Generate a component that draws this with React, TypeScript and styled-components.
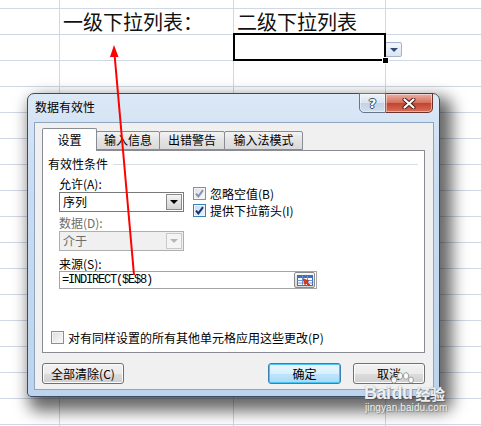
import React from 'react';
import styled, { createGlobalStyle, css } from 'styled-components';

const GlobalStyle = createGlobalStyle`
  html, body {
    margin: 0;
    padding: 0;
    background: #fff;
    overflow: hidden;
  }
  body {
    font-family: "Noto Sans CJK SC", sans-serif;
  }
`;

const Page = styled.div`
  position: relative;
  width: 482px;
  height: 426px;
  overflow: hidden;
  background: #fff;
`;

/* ---------- spreadsheet ---------- */

const Sheet = styled.div`
  display: grid;
  grid-template-columns: 60px 174px 152px 96px;
  grid-auto-rows: 26px;
  margin-top: -17px;
`;

const SheetCell = styled.div<{ $active?: boolean }>`
  position: relative;
  box-sizing: border-box;
  border-right: 1px solid #d0d7e5;
  border-bottom: 1px solid #d0d7e5;
  display: flex;
  align-items: flex-end;
  padding-left: 3px;
  z-index: ${(p) => (p.$active ? 2 : 'auto')};
  ${(p) =>
    p.$active &&
    css`
      &::after {
        content: '';
        position: absolute;
        top: -2px;
        left: -1px;
        right: -1px;
        bottom: -1px;
        border: 2px solid #000;
      }
    `}
`;

const HeaderText = styled.span`
  font-family: "Noto Sans CJK SC", serif;
  font-size: 20px;
  line-height: 24px;
  color: #111;
  white-space: nowrap;
`;

const FillHandle = styled.span`
  position: absolute;
  right: -4px;
  bottom: -4px;
  width: 5px;
  height: 5px;
  background: #000;
  border: 1px solid #fff;
  z-index: 3;
`;

const CellDropButton = styled.span`
  position: absolute;
  left: 100%;
  top: 7px;
  width: 17px;
  height: 15px;
  box-sizing: border-box;
  border: 1px solid #a3b3ca;
  border-radius: 2px;
  background: linear-gradient(#f4f7fc, #dbe4f1);
  display: flex;
  align-items: center;
  justify-content: center;
  &::before {
    content: '';
    border-left: 4px solid transparent;
    border-right: 4px solid transparent;
    border-top: 4px solid #33477a;
  }
`;

/* ---------- dialog window ---------- */

const Window = styled.div`
  position: absolute;
  left: 27px;
  top: 93px;
  width: 413px;
  height: 304px;
  box-sizing: border-box;
  border: 1px solid #3d4b5c;
  border-radius: 7px 7px 4px 4px;
  background: linear-gradient(180deg, #dbe8f6 0%, #c9dcf1 30%, #bdd4ee 100%);
  box-shadow: 7px 9px 16px 5px rgba(0, 0, 0, 0.6);
  display: flex;
  flex-direction: column;
  padding: 0 5px 6px 6px;
  font-size: 12px;
  color: #000;
`;

const TitleBar = styled.div`
  height: 28px;
  display: flex;
  align-items: flex-start;
  flex-shrink: 0;
`;

const Title = styled.span`
  padding: 6px 0 0 1px;
  line-height: 14px;
`;

const CaptionGroup = styled.div`
  margin: -1px 1px 0 auto;
  display: flex;
`;

const CaptionButton = styled.span<{ $close?: boolean }>`
  height: 20px;
  width: ${(p) => (p.$close ? 47 : 27)}px;
  box-sizing: border-box;
  border: 1px solid ${(p) => (p.$close ? '#6a302a' : '#66768a')};
  border-left-width: ${(p) => (p.$close ? 0 : 1)}px;
  border-radius: ${(p) => (p.$close ? '0 0 5px 0' : '0 0 0 5px')};
  background: ${(p) =>
    p.$close
      ? 'linear-gradient(#eab0a4 0%, #d7705e 48%, #c4432f 52%, #d6705a 100%)'
      : 'linear-gradient(#eef3f9 0%, #d9e4f0 48%, #c2d2e5 52%, #d2deec 100%)'};
  box-shadow: inset 0 0 0 1px rgba(255, 255, 255, 0.45);
  display: flex;
  align-items: center;
  justify-content: center;
`;

const HelpGlyph = styled.span`
  font-family: "DejaVu Sans", sans-serif;
  font-weight: bold;
  font-size: 13px;
  line-height: 13px;
  color: #fff;
  text-shadow: -1px 0 #3b4656, 1px 0 #3b4656, 0 -1px #3b4656, 0 1px #3b4656;
`;

const Client = styled.div`
  flex: 1;
  box-sizing: border-box;
  background: #f0f0f0;
  border: 1px solid #8fa4bf;
  padding: 5px 8px 0 7px;
  display: flex;
  flex-direction: column;
`;

const TabStrip = styled.div`
  display: flex;
  align-items: flex-end;
  height: 22px;
`;

const Tab = styled.span<{ $active?: boolean; $w: number }>`
  position: relative;
  box-sizing: border-box;
  width: ${(p) => p.$w}px;
  height: ${(p) => (p.$active ? 23 : 19)}px;
  margin-bottom: ${(p) => (p.$active ? -1 : 0)}px;
  margin-left: -1px;
  &:first-child {
    margin-left: 0;
  }
  border: 1px solid #898c95;
  border-bottom: ${(p) => (p.$active ? 'none' : '1px solid #898c95')};
  border-radius: 2px 2px 0 0;
  background: ${(p) => (p.$active ? '#fff' : 'linear-gradient(#f3f3f3, #e3e3e3 50%, #d9d9d9)')};
  z-index: ${(p) => (p.$active ? 1 : 0)};
  display: flex;
  align-items: ${(p) => (p.$active ? 'center' : 'flex-end')};
  justify-content: center;
  padding-bottom: ${(p) => (p.$active ? 0 : 2)}px;
  line-height: 14px;
  white-space: nowrap;
`;

const Panel = styled.div`
  box-sizing: border-box;
  width: 383px;
  height: 203px;
  border: 1px solid #898c95;
  background: #fff;
  padding: 6px 6px 7px 5px;
  display: flex;
  flex-direction: column;
`;

const GroupHeader = styled.div`
  display: flex;
  align-items: center;
  gap: 5px;
  line-height: 14px;
  &::after {
    content: '';
    flex: 1;
    height: 1px;
    background: #d5dfe5;
  }
`;

const FormBody = styled.div`
  padding-left: 11px;
  display: flex;
  flex-direction: column;
`;

const FieldsRow = styled.div`
  display: flex;
  gap: 9px;
`;

const FieldColumn = styled.div`
  width: 125px;
  display: flex;
  flex-direction: column;
`;

const Label = styled.span<{ $disabled?: boolean; $top: number }>`
  line-height: 14px;
  margin-top: ${(p) => p.$top}px;
  color: ${(p) => (p.$disabled ? '#6d6d6d' : '#000')};
  white-space: nowrap;
`;

const Select = styled.div<{ $disabled?: boolean }>`
  height: 20px;
  box-sizing: border-box;
  border: 1px solid ${(p) => (p.$disabled ? '#afafaf' : '#7a7a7a')};
  background: ${(p) => (p.$disabled ? '#f0f0f0' : '#fff')};
  color: ${(p) => (p.$disabled ? '#6d6d6d' : '#000')};
  display: flex;
  align-items: center;
  padding: 1px;
  margin-top: 1px;
`;

const SelectText = styled.span`
  flex: 1;
  padding-left: 2px;
  line-height: 14px;
`;

const SelectArrow = styled.span<{ $disabled?: boolean }>`
  width: 16px;
  height: 16px;
  box-sizing: border-box;
  border: 1px solid ${(p) => (p.$disabled ? '#c9c9c9' : '#8a8a8a')};
  background: ${(p) => (p.$disabled ? '#f4f4f4' : 'linear-gradient(#f6f6f6, #e2e2e2 50%, #d3d3d3)')};
  display: flex;
  align-items: center;
  justify-content: center;
  &::before {
    content: '';
    border-left: 4px solid transparent;
    border-right: 4px solid transparent;
    border-top: 4px solid ${(p) => (p.$disabled ? '#b5b5b5' : '#000')};
  }
`;

const CheckColumn = styled.div`
  margin-top: 15px;
  display: flex;
  flex-direction: column;
  gap: 2px;
`;

const CheckRow = styled.label<{ $indent?: number }>`
  display: flex;
  align-items: center;
  gap: 4px;
  height: 15px;
  line-height: 14px;
  margin-left: ${(p) => p.$indent ?? 0}px;
  white-space: nowrap;
`;

const Box = styled.span<{ $hot?: boolean }>`
  width: 13px;
  height: 13px;
  box-sizing: border-box;
  border: 1px solid ${(p) => (p.$hot ? '#3c7fb1' : '#8e8f8f')};
  background: ${(p) =>
    p.$hot ? 'linear-gradient(135deg, #b9dcf6, #eaf5fd)' : 'linear-gradient(135deg, #dedede, #fbfbfb)'};
  box-shadow: inset 0 0 0 1px #f4f4f4;
  display: flex;
  align-items: center;
  justify-content: center;
  flex-shrink: 0;
`;

const SourceInput = styled.div`
  width: 258px;
  height: 18px;
  box-sizing: border-box;
  border: 1px solid #a5a5a5;
  display: flex;
  align-items: center;
  padding-right: 1px;
`;

const SourceText = styled.span`
  flex: 1;
  padding-left: 2px;
  font-family: "Liberation Mono", "DejaVu Sans Mono", monospace;
  font-size: 12px;
  letter-spacing: -1.2px;
  line-height: 14px;
`;

const RangeButton = styled.span`
  width: 21px;
  height: 16px;
  box-sizing: border-box;
  border: 1px solid #8b8b8b;
  border-radius: 2px;
  background: linear-gradient(#fafafa, #e4e4e4 50%, #d8d8d8);
  display: flex;
  align-items: center;
  justify-content: center;
`;

const ApplyRow = styled(CheckRow)`
  margin-top: auto;
`;

const ButtonRow = styled.div`
  display: flex;
  align-items: center;
  margin-top: 10px;
  gap: 12px;
`;

const PushButton = styled.span<{ $default?: boolean; $w: number; $push?: boolean }>`
  width: ${(p) => p.$w}px;
  height: 21px;
  box-sizing: border-box;
  margin-left: ${(p) => (p.$push ? 'auto' : '0')};
  border: 1px solid ${(p) => (p.$default ? '#3c7fb1' : '#707070')};
  border-radius: 3px;
  background: ${(p) =>
    p.$default
      ? 'linear-gradient(#eaf6fd 0%, #d9f0fc 50%, #bee6fd 51%, #a7d9f5 100%)'
      : 'linear-gradient(#f2f2f2 0%, #ebebeb 50%, #dddddd 51%, #cfcfcf 100%)'};
  box-shadow: inset 0 0 0 1px ${(p) => (p.$default ? '#48c3f6' : '#fcfcfc')};
  display: flex;
  align-items: center;
  justify-content: center;
  line-height: 14px;
  white-space: nowrap;
`;

/* ---------- overlays ---------- */

const ArrowLayer = styled.svg`
  position: absolute;
  left: 0;
  top: 0;
  z-index: 10;
  pointer-events: none;
`;

const Watermark = styled.div`
  position: absolute;
  left: 364px;
  top: 374px;
  z-index: 11;
  display: flex;
  flex-direction: column;
  color: rgba(255, 255, 255, 0.88);
  text-shadow: 0 0 1px #8a8a8a, 1px 1px 1px rgba(0, 0, 0, 0.25);
  pointer-events: none;
`;

const MarkTop = styled.div`
  display: flex;
  align-items: flex-end;
  height: 28px;
`;

const MarkWord = styled.span<{ $size: number }>`
  font-family: "Liberation Sans", Arial, "Noto Sans CJK SC", sans-serif;
  font-weight: bold;
  font-size: ${(p) => p.$size}px;
  line-height: ${(p) => p.$size}px;
  letter-spacing: -0.5px;
`;

const PawWord = styled(MarkWord)`
  position: relative;
  margin-left: 1px;
`;

const PawToes = styled.svg`
  position: absolute;
  left: -2px;
  top: -13px;
`;

const MarkSub = styled.span`
  font-family: "Liberation Sans", Arial, sans-serif;
  font-size: 10px;
  line-height: 12px;
  margin-left: 1px;
  letter-spacing: 0.1px;
`;

const Check: React.FC<{ color: string }> = ({ color }) => (
  <svg width="9" height="9" viewBox="0 0 9 9">
    <path d="M1 4.6 L3.4 7.4 L8 1.2" fill="none" stroke={color} strokeWidth="2" strokeLinejoin="miter" />
  </svg>
);

const sheetRows = 18;

export default function App() {
  const cells: React.ReactNode[] = [];
  for (let r = 0; r < sheetRows; r++) {
    for (let c = 0; c < 4; c++) {
      const key = `${r}-${c}`;
      if (r === 1 && c === 1) {
        cells.push(
          <SheetCell key={key}>
            <HeaderText>一级下拉列表：</HeaderText>
          </SheetCell>
        );
      } else if (r === 1 && c === 2) {
        cells.push(
          <SheetCell key={key}>
            <HeaderText>二级下拉列表</HeaderText>
          </SheetCell>
        );
      } else if (r === 2 && c === 2) {
        cells.push(
          <SheetCell key={key} $active>
            <FillHandle />
            <CellDropButton />
          </SheetCell>
        );
      } else {
        cells.push(<SheetCell key={key} />);
      }
    }
  }

  return (
    <Page>
      <GlobalStyle />
      <Sheet>{cells}</Sheet>

      <Window>
        <TitleBar>
          <Title>数据有效性</Title>
          <CaptionGroup>
            <CaptionButton>
              <HelpGlyph>?</HelpGlyph>
            </CaptionButton>
            <CaptionButton $close>
              <svg width="14" height="11" viewBox="0 0 14 11">
                <path d="M2.5 1.5 L11.5 9.5 M11.5 1.5 L2.5 9.5" stroke="#4b1a14" strokeWidth="4" strokeLinecap="round" />
                <path d="M2.5 1.5 L11.5 9.5 M11.5 1.5 L2.5 9.5" stroke="#fff" strokeWidth="2.2" strokeLinecap="round" />
              </svg>
            </CaptionButton>
          </CaptionGroup>
        </TitleBar>

        <Client>
          <TabStrip>
            <Tab $active $w={55}>设置</Tab>
            <Tab $w={64}>输入信息</Tab>
            <Tab $w={66}>出错警告</Tab>
            <Tab $w={79}>输入法模式</Tab>
          </TabStrip>

          <Panel>
            <GroupHeader>有效性条件</GroupHeader>
            <FormBody>
              <FieldsRow>
                <FieldColumn>
                  <Label $top={6}>允许(A):</Label>
                  <Select>
                    <SelectText>序列</SelectText>
                    <SelectArrow />
                  </Select>
                  <Label $top={4} $disabled>
                    数据(D):
                  </Label>
                  <Select $disabled>
                    <SelectText>介于</SelectText>
                    <SelectArrow $disabled />
                  </Select>
                </FieldColumn>
                <CheckColumn>
                  <CheckRow>
                    <Box>
                      <Check color="#7f93bd" />
                    </Box>
                    忽略空值(B)
                  </CheckRow>
                  <CheckRow>
                    <Box $hot>
                      <Check color="#17307a" />
                    </Box>
                    提供下拉箭头(I)
                  </CheckRow>
                </CheckColumn>
              </FieldsRow>
              <Label $top={6}>来源(S):</Label>
              <SourceInput>
                <SourceText>=INDIRECT($E$8)</SourceText>
                <RangeButton>
                  <svg width="16" height="11" viewBox="0 0 16 11">
                    <rect x="0.5" y="0.5" width="15" height="10" fill="#fff" stroke="#3f6fc0" />
                    <rect x="0.5" y="0.5" width="15" height="2.5" fill="#3f6fc0" />
                    <path d="M0.5 5.5 H15.5 M0.5 8 H15.5 M5.5 0.5 V10.5 M10.5 0.5 V10.5" stroke="#6f93d0" />
                    <path d="M6 3.5 L12 6 L10 7 L13 10 L11.8 11 L9 8 L8 10 Z" fill="#e03a1e" stroke="#9a1d0c" strokeWidth="0.5" />
                  </svg>
                </RangeButton>
              </SourceInput>
            </FormBody>
            <ApplyRow $indent={3}>
              <Box />
              对有同样设置的所有其他单元格应用这些更改(P)
            </ApplyRow>
          </Panel>

          <ButtonRow>
            <PushButton $w={82}>全部清除(C)</PushButton>
            <PushButton $w={73} $default $push>
              确定
            </PushButton>
            <PushButton $w={72}>取消</PushButton>
          </ButtonRow>
        </Client>
      </Window>

      <ArrowLayer width="482" height="426" viewBox="0 0 482 426">
        <line x1="114.5" y1="54" x2="134" y2="275" stroke="#ff0000" strokeWidth="2" />
        <polygon points="114,45 110,57 118.5,57" fill="#ff0000" />
      </ArrowLayer>

      <Watermark>
        <MarkTop>
          <MarkWord $size={18}>Bai</MarkWord>
          <PawWord $size={18}>
            <PawToes width="24" height="14" viewBox="0 0 24 14">
              <g fill="rgba(255,255,255,0.9)" stroke="#8a8a8a" strokeWidth="0.8">
                <ellipse cx="4" cy="9" rx="2.6" ry="3.2" />
                <ellipse cx="10" cy="5" rx="2.6" ry="3.4" />
                <ellipse cx="16" cy="5" rx="2.6" ry="3.4" />
                <ellipse cx="21" cy="9" rx="2.4" ry="3" />
              </g>
            </PawToes>
            du
          </PawWord>
          <MarkWord $size={15} style={{ marginLeft: 3 }}>
            经验
          </MarkWord>
        </MarkTop>
        <MarkSub>jingyan.baidu.com</MarkSub>
      </Watermark>
    </Page>
  );
}
